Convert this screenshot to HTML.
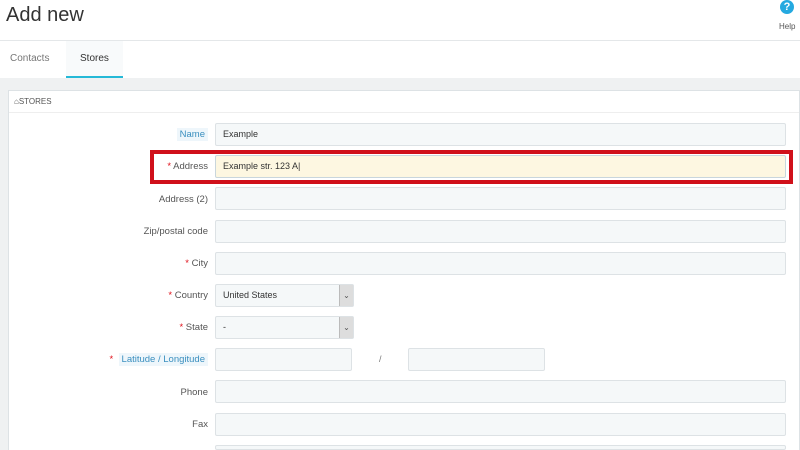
<!DOCTYPE html><html><head><style>
html,body{margin:0;width:800px;height:450px;overflow:hidden}
body{background:#fff;font-family:"Liberation Sans",sans-serif;position:relative}
.a{position:absolute}
.inp{position:absolute;left:215px;width:571px;height:23px;background:#f5f8f9;border:1px solid #dde2e5;box-sizing:border-box;border-radius:2px;font-size:9px;color:#333;padding-left:7px;line-height:21px}
.lbl{position:absolute;right:592px;font-size:9.5px;color:#555;text-align:right;white-space:nowrap}
.st{color:#e0101a}
.sel{position:absolute;right:0;top:0;width:13px;height:21px;background:#ddd;border-left:1px solid #bbb;font-size:8px;text-align:center;color:#555}
</style></head><body>
<div class="a" style="left:6px;top:4px;font-size:20px;color:#333">Add new</div>
<div class="a" style="left:780px;top:0;width:14px;height:14px;border-radius:50%;background:#25a9e0;color:#fff;font-size:11px;font-weight:bold;text-align:center;line-height:14px">?</div>
<div class="a" style="left:779px;top:22px;font-size:8px;color:#555">Help</div>
<div class="a" style="left:0;top:40px;width:800px;height:1px;background:#e4e7e9"></div>
<div class="a" style="left:66px;top:41px;width:57px;height:35px;background:#f8fafb;border-bottom:2px solid #25b9d7"></div>
<div class="a" style="left:10px;top:53px;font-size:10px;color:#777">Contacts</div>
<div class="a" style="left:80px;top:53px;font-size:10px;color:#333">Stores</div>
<div class="a" style="left:0;top:78px;width:800px;height:372px;background:#eff1f2"></div>
<div class="a" style="left:8px;top:90px;width:792px;height:360px;background:#fff;border:1px solid #dde2e5;border-bottom:none;box-sizing:border-box"></div>
<div class="a" style="left:14px;top:97px;font-size:8px;color:#555">&#8962;STORES</div>
<div class="a" style="left:9px;top:112px;width:790px;height:1px;background:#eee"></div>

<div class="lbl" style="top:129px"><span style="background:#eef6fb;color:#3a8fbf;padding:1px 3px">Name</span></div>
<div class="inp" style="top:123px">Example</div>
<div class="a" style="left:150px;top:150px;width:643px;height:34px;border:4px solid #d0101a;box-sizing:border-box"></div>
<div class="lbl" style="top:161px"><span class="st">*</span> Address</div>
<div class="inp" style="top:155px;background:#fdf7e1;border-color:#c9d6dc">Example str. 123 A|</div>
<div class="lbl" style="top:194px">Address (2)</div><div class="inp" style="top:187px"></div>
<div class="lbl" style="top:226px">Zip/postal code</div><div class="inp" style="top:220px"></div>
<div class="lbl" style="top:258px"><span class="st">*</span> City</div><div class="inp" style="top:252px"></div>
<div class="lbl" style="top:290px"><span class="st">*</span> Country</div><div class="inp" style="top:284px;width:139px">United States<div class="sel">&#8964;</div></div>
<div class="lbl" style="top:322px"><span class="st">*</span> State</div><div class="inp" style="top:316px;width:139px">-<div class="sel">&#8964;</div></div>
<div class="lbl" style="top:354px"><span class="st">*</span> &nbsp;<span style="background:#eef6fb;color:#3a8fbf;padding:1px 3px">Latitude / Longitude</span></div>
<div class="inp" style="top:348px;width:137px"></div>
<div class="a" style="left:379px;top:354px;font-size:9px;color:#777">/</div>
<div class="inp" style="top:348px;left:408px;width:137px"></div>
<div class="lbl" style="top:387px">Phone</div><div class="inp" style="top:380px"></div>
<div class="lbl" style="top:419px">Fax</div><div class="inp" style="top:413px"></div>
<div class="inp" style="top:445px;height:5px"></div>
</body></html>
